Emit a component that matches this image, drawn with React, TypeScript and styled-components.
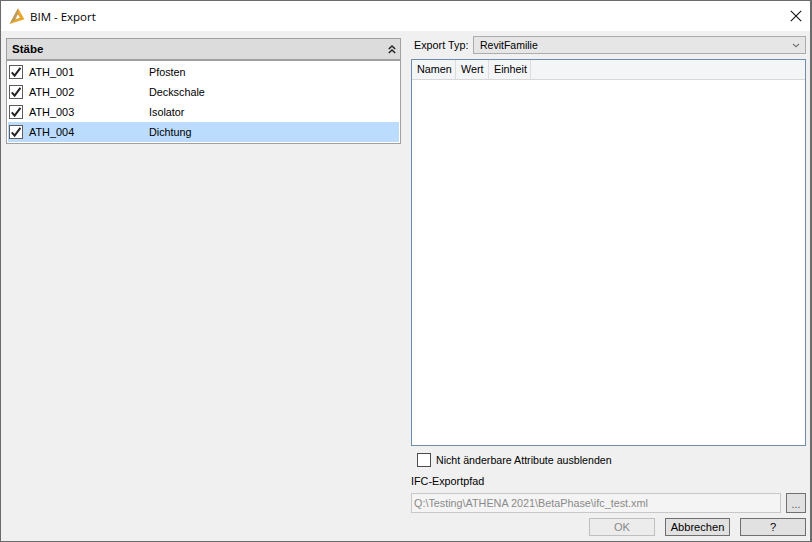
import React from "react";
import styled, { createGlobalStyle } from "styled-components";

const Global = createGlobalStyle`
  html, body { margin: 0; padding: 0; background: #f0f0f0; }
  * { box-sizing: border-box; }
  body { font-family: "Liberation Sans", Arial, sans-serif; font-size: 10.8px; color: #000; }
`;
const Win = styled.div`
  width: 812px; height: 542px; display: flex; flex-direction: column;
  border: 1px solid #6b6b6b; border-right-width: 2px; background: #f0f0f0; overflow: hidden;
`;
const TitleBar = styled.div`
  height: 30px; flex: none; background: #fff; display: flex; align-items: center; padding: 0 8px 0 8px; gap: 4px;
`;
const Title = styled.span`
  font-family: "Open Sans", sans-serif; font-size: 11.5px; color: #000; flex: 1;
`;
const Body = styled.div`
  flex: 1; display: flex; padding: 7px 4px 4px 5px; gap: 10px; min-height: 0;
`;
const Left = styled.div`
  width: 395px; flex: none;
`;
const Panel = styled.div`
  border: 1px solid #a0a0a0; background: #fff;
`;
const PanelHead = styled.div`
  height: 22px; background: #dcdcdc; border-bottom: 2px solid #a0a0a0; margin-bottom: 1px;
  display: flex; align-items: center; justify-content: space-between; padding: 0 4px 0 5px;
  font-weight: 700; font-size: 11.5px;
`;
const Rows = styled.div`
  padding: 0 1px 1px 1px;
`;
const Row = styled.div<{ $sel?: boolean }>`
  height: 20px; display: flex; align-items: center; background: ${p => (p.$sel ? "#bbdcfd" : "#fff")}; padding-left: 1px;
`;
const CheckBox = styled.span`
  width: 14px; height: 14px; flex: none; border: 1px solid #5c5c5c; background: #fff; display: flex; align-items: center; justify-content: center;
`;
const RowCheck = styled(CheckBox)`
  margin-right: 6px;
`;
const Code = styled.span`
  width: 120px; flex: none; font-size: 10.9px;
`;
const Name = styled.span`
  font-size: 10.8px;
`;
const Right = styled.div`
  flex: 1; display: flex; flex-direction: column; min-width: 0;
`;
const TypeRow = styled.div`
  height: 18px; display: flex; align-items: center; margin-top: -2px;
`;
const TypeLabel = styled.span`
  width: 62px; flex: none; padding-left: 3px;
`;
const Select = styled.div`
  flex: 1; height: 18px; background: #e6e6e6; border: 1px solid #acacac; display: flex; align-items: center; justify-content: space-between; padding: 0 5px 0 6px; font-size: 10.5px;
`;
const Table = styled.div`
  flex: none; height: 387px; margin-top: 5px; border: 1px solid #6f8cac; background: #fff; width: 395px;
`;
const THead = styled.div`
  height: 20px; display: flex; background: #f4f5f7; border-bottom: 1px solid #d8d8d8;
`;
const Th = styled.div<{ $w: number }>`
  width: ${p => p.$w}px; border-right: 1px solid #dcdcdc; padding: 3px 0 0 5px;
`;
const AttrRow = styled.label`
  display: flex; align-items: center; gap: 5px; margin: 7px 0 0 6px; height: 14px; font-size: 10.65px;
`;
const EmptyBox = styled(CheckBox)`
  border-color: #4d4d4d;
`;
const PathLabel = styled.div`
  margin-top: 8px; height: 13px;
`;
const PathRow = styled.div`
  display: flex; gap: 5px; margin-top: 5px; height: 20px;
`;
const PathInput = styled.div`
  flex: 1; border: 1px solid #c8c8c8; background: #f4f4f4; color: #8a8a8a; padding: 3px 0 0 2px;
`;
const Browse = styled.div`
  width: 20px; border: 1px solid #707070; background: #e1e1e1; color: #555; text-align: center; line-height: 20px;
`;
const Actions = styled.div`
  display: flex; justify-content: flex-end; gap: 10px; margin-top: 5px;
`;
const Btn = styled.div<{ $w: number; $off?: boolean }>`
  width: ${p => p.$w}px; height: 18px; border: 1px solid ${p => (p.$off ? "#bfbfbf" : "#6f6f6f")};
  background: ${p => (p.$off ? "#ececec" : "#e1e1e1")}; color: ${p => (p.$off ? "#8a8a8a" : "#000")};
  display: flex; align-items: center; justify-content: center; font-size: 11.1px;
`;

const Check = () => (
  <svg width="12" height="12" viewBox="0 0 12 12">
    <path d="M1.8 6.3 L4.6 9.6 L10.4 1.8" fill="none" stroke="#222" strokeWidth="2" />
  </svg>
);
const Logo = () => (
  <svg width="17" height="17" viewBox="0 0 17 17">
    <path d="M9 .2 L15.4 11.2 L.6 16 Z M8.7 6.2 L6.2 11.2 L11 9.7 Z" fill="#eaa42a" fillRule="evenodd" />
    <path d="M9 .2 L.6 16 L6.2 11.2 L8.7 6.2 Z" fill="#b59a68" />
  </svg>
);
const CloseIcon = () => (
  <svg width="12" height="12" viewBox="0 0 12 12">
    <path d="M.8 .8 L11.2 11.2 M11.2 .8 L.8 11.2" stroke="#111" strokeWidth="1.1" />
  </svg>
);
const Collapse = () => (
  <svg width="8" height="9" viewBox="0 0 8 9">
    <path d="M.8 4 L4 1 L7.2 4 M.8 8 L4 5 L7.2 8" fill="none" stroke="#222" strokeWidth="1.5" />
  </svg>
);
const Chevron = () => (
  <svg width="8" height="5" viewBox="0 0 8 5">
    <path d="M1 1 L4 3.6 L7 1" fill="none" stroke="#777" strokeWidth="1.2" />
  </svg>
);

const rows = [
  ["ATH_001", "Pfosten"],
  ["ATH_002", "Deckschale"],
  ["ATH_003", "Isolator"],
  ["ATH_004", "Dichtung"],
];

export default function App() {
  return (
    <Win>
      <Global />
      <TitleBar>
        <Logo />
        <Title>BIM - Export</Title>
        <CloseIcon />
      </TitleBar>
      <Body>
        <Left>
          <Panel>
            <PanelHead>
              <span>Stäbe</span>
              <Collapse />
            </PanelHead>
            <Rows>
              {rows.map(([c, n], i) => (
                <Row key={c} $sel={i === 3}>
                  <RowCheck><Check /></RowCheck>
                  <Code>{c}</Code>
                  <Name>{n}</Name>
                </Row>
              ))}
            </Rows>
          </Panel>
        </Left>
        <Right>
          <TypeRow>
            <TypeLabel>Export Typ:</TypeLabel>
            <Select>
              <span>RevitFamilie</span>
              <Chevron />
            </Select>
          </TypeRow>
          <Table>
            <THead>
              <Th $w={44}>Namen</Th>
              <Th $w={33}>Wert</Th>
              <Th $w={42}>Einheit</Th>
            </THead>
          </Table>
          <AttrRow>
            <EmptyBox />
            Nicht änderbare Attribute ausblenden
          </AttrRow>
          <PathLabel>IFC-Exportpfad</PathLabel>
          <PathRow>
            <PathInput>Q:\Testing\ATHENA 2021\BetaPhase\ifc_test.xml</PathInput>
            <Browse>...</Browse>
          </PathRow>
          <Actions>
            <Btn $w={66} $off>OK</Btn>
            <Btn $w={65}>Abbrechen</Btn>
            <Btn $w={66}>?</Btn>
          </Actions>
        </Right>
      </Body>
    </Win>
  );
}
